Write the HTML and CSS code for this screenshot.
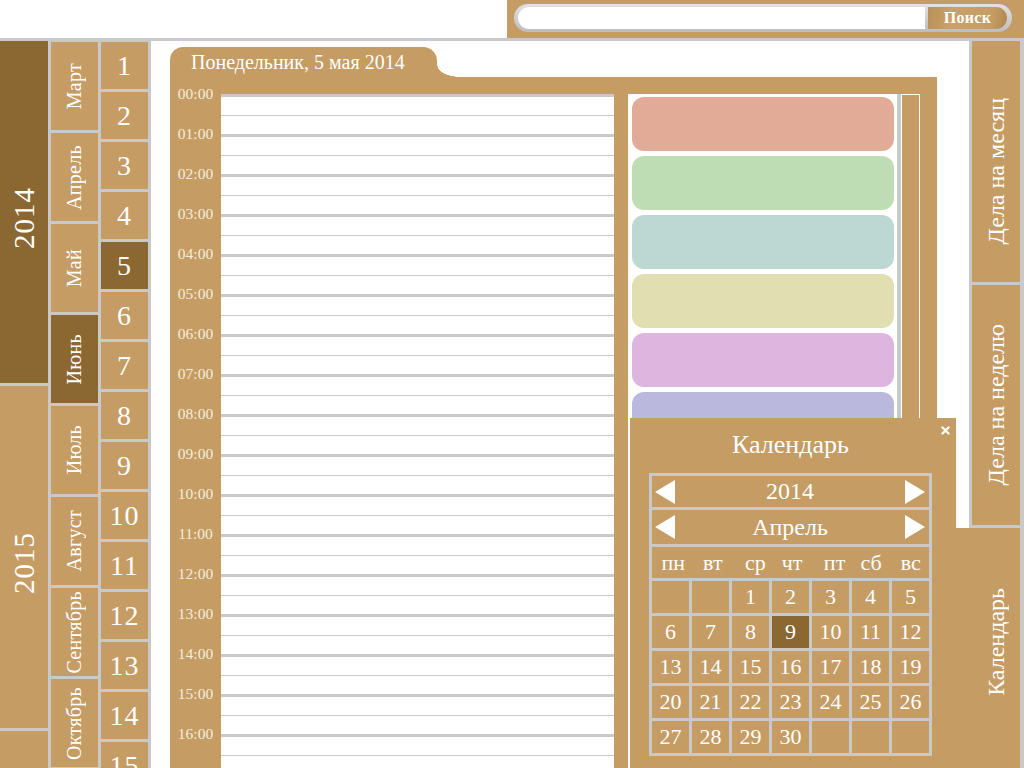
FILE: index.html
```html
<!DOCTYPE html>
<html lang="ru">
<head>
<meta charset="utf-8">
<title>Ежедневник</title>
<link rel="stylesheet" href="styles.css">
</head>
<body>
<header class="topbar">
  <div class="topbar-blank"></div>
  <div class="search">
    <div class="search-pill">
      <input class="search-input" type="text">
      <button class="search-btn" type="button">Поиск</button>
    </div>
  </div>
</header>

<div class="main">
  <nav class="years">
    <div class="year current"><span class="vtext">2014</span></div>
    <div class="year"><span class="vtext">2015</span></div>
    <div class="year"></div>
  </nav>

  <nav class="months">
    <div class="month"><span class="vtext">Март</span></div>
    <div class="month"><span class="vtext">Апрель</span></div>
    <div class="month"><span class="vtext">Май</span></div>
    <div class="month current"><span class="vtext">Июнь</span></div>
    <div class="month"><span class="vtext">Июль</span></div>
    <div class="month"><span class="vtext">Август</span></div>
    <div class="month"><span class="vtext">Сентябрь</span></div>
    <div class="month"><span class="vtext">Октябрь</span></div>
  </nav>

  <nav class="days">
    <div class="day">1</div>
    <div class="day">2</div>
    <div class="day">3</div>
    <div class="day">4</div>
    <div class="day current">5</div>
    <div class="day">6</div>
    <div class="day">7</div>
    <div class="day">8</div>
    <div class="day">9</div>
    <div class="day">10</div>
    <div class="day">11</div>
    <div class="day">12</div>
    <div class="day">13</div>
    <div class="day">14</div>
    <div class="day">15</div>
  </nav>

  <section class="workspace">
    <div class="day-panel">
      <div class="day-tab">Понедельник, 5 мая 2014</div>
      <div class="panel-body">
        <div class="times">
          <div class="time">00:00</div><div class="time">01:00</div><div class="time">02:00</div>
          <div class="time">03:00</div><div class="time">04:00</div><div class="time">05:00</div>
          <div class="time">06:00</div><div class="time">07:00</div><div class="time">08:00</div>
          <div class="time">09:00</div><div class="time">10:00</div><div class="time">11:00</div>
          <div class="time">12:00</div><div class="time">13:00</div><div class="time">14:00</div>
          <div class="time">15:00</div><div class="time">16:00</div>
        </div>
        <div class="schedule">
          <div class="hour"><div class="half"></div></div><div class="hour"><div class="half"></div></div>
          <div class="hour"><div class="half"></div></div><div class="hour"><div class="half"></div></div>
          <div class="hour"><div class="half"></div></div><div class="hour"><div class="half"></div></div>
          <div class="hour"><div class="half"></div></div><div class="hour"><div class="half"></div></div>
          <div class="hour"><div class="half"></div></div><div class="hour"><div class="half"></div></div>
          <div class="hour"><div class="half"></div></div><div class="hour"><div class="half"></div></div>
          <div class="hour"><div class="half"></div></div><div class="hour"><div class="half"></div></div>
          <div class="hour"><div class="half"></div></div><div class="hour"><div class="half"></div></div>
          <div class="hour"><div class="half"></div></div><div class="hour"><div class="half"></div></div>
          <div class="hour"><div class="half"></div></div>
        </div>
        <div class="agenda">
          <div class="cards">
            <div class="card c-red"></div>
            <div class="card c-green"></div>
            <div class="card c-teal"></div>
            <div class="card c-olive"></div>
            <div class="card c-pink"></div>
            <div class="card c-violet"></div>
            <div class="card c-red"></div>
          </div>
          <div class="track"><div class="thumb"></div></div>
        </div>
      </div>
    </div>

    <div class="popup">
      <span class="popup-close"><svg width="9" height="9" viewBox="0 0 9 9"><path d="M1.5 1.5 L7.5 7.5 M7.5 1.5 L1.5 7.5" stroke="#fff" stroke-width="2.4" stroke-linecap="round"/></svg></span>
      <div class="popup-title">Календарь</div>
      <div class="cal">
        <div class="cal-nav">
          <svg class="arrow" width="20" height="24" viewBox="0 0 20 24"><polygon points="20,0 0,12 20,24" fill="#fff"/></svg>
          <span>2014</span>
          <svg class="arrow" width="20" height="24" viewBox="0 0 20 24"><polygon points="0,0 20,12 0,24" fill="#fff"/></svg>
        </div>
        <div class="cal-nav">
          <svg class="arrow" width="20" height="24" viewBox="0 0 20 24"><polygon points="20,0 0,12 20,24" fill="#fff"/></svg>
          <span>Апрель</span>
          <svg class="arrow" width="20" height="24" viewBox="0 0 20 24"><polygon points="0,0 20,12 0,24" fill="#fff"/></svg>
        </div>
        <div class="cal-week">
          <span>пн</span><span>вт</span><span class="wd-r">ср</span><span>чт</span><span class="wd-r">пт</span><span>сб</span><span>вс</span>
        </div>
        <div class="cal-day"></div><div class="cal-day"></div><div class="cal-day">1</div><div class="cal-day">2</div><div class="cal-day">3</div><div class="cal-day">4</div><div class="cal-day">5</div>
        <div class="cal-day">6</div><div class="cal-day">7</div><div class="cal-day">8</div><div class="cal-day sel">9</div><div class="cal-day">10</div><div class="cal-day">11</div><div class="cal-day">12</div>
        <div class="cal-day">13</div><div class="cal-day">14</div><div class="cal-day">15</div><div class="cal-day">16</div><div class="cal-day">17</div><div class="cal-day">18</div><div class="cal-day">19</div>
        <div class="cal-day">20</div><div class="cal-day">21</div><div class="cal-day">22</div><div class="cal-day">23</div><div class="cal-day">24</div><div class="cal-day">25</div><div class="cal-day">26</div>
        <div class="cal-day">27</div><div class="cal-day">28</div><div class="cal-day">29</div><div class="cal-day">30</div><div class="cal-day"></div><div class="cal-day"></div><div class="cal-day"></div>
      </div>
    </div>
  </section>

  <aside class="side">
    <div class="stab first"><span class="vtext">Дела на месяц</span></div>
    <div class="stab"><span class="vtext">Дела на неделю</span></div>
    <div class="stab active"><span class="vtext">Календарь</span></div>
  </aside>
</div>
</body>
</html>
```

FILE: styles.css
```css
* { box-sizing: border-box; }

html, body {
  margin: 0;
  padding: 0;
}

body {
  width: 1024px;
  height: 768px;
  overflow: hidden;
  background: #fff;
  color: #fff;
  font-family: "Liberation Serif", "Times New Roman", serif;
}

.vtext {
  writing-mode: vertical-rl;
  transform: rotate(180deg);
  white-space: nowrap;
}

/* ---------- top bar ---------- */
.topbar {
  display: flex;
  height: 41px;
  border-bottom: 3px solid #c9c9c9;
}

.topbar-blank { width: 507px; }

.search {
  flex: 1;
  background: #c59c63;
  padding: 4px 12px 0 7px;
}

.search-pill {
  height: 28px;
  display: flex;
  gap: 3px;
  padding: 3px 5px 3px 4px;
  border-radius: 14px;
  background: linear-gradient(#e2e2e2, #bdbdbd);
}

.search-input {
  flex: 1;
  border: 0;
  outline: 0;
  border-radius: 11px 0 0 11px;
  background: #fff;
}

.search-btn {
  width: 79px;
  border: 0;
  padding: 0;
  border-radius: 0 11px 11px 0;
  background: linear-gradient(100deg, #b88f57, #caa169 30%, #c59c63 80%, #b08650);
  color: #fff;
  font-family: "Liberation Serif", serif;
  font-weight: bold;
  font-size: 16px;
  letter-spacing: 0.3px;
}

/* ---------- main area ---------- */
.main {
  display: flex;
  gap: 3px;
  height: 727px;
  background: #c9c9c9;
}

.years {
  width: 48px;
  flex: none;
  display: flex;
  flex-direction: column;
  gap: 3px;
}

.year {
  height: 342px;
  flex: none;
  background: #c59c63;
  display: flex;
  align-items: center;
  justify-content: center;
  padding-top: 12px;
  font-size: 29px;
  letter-spacing: 1px;
}

.year:last-child { flex: 1; height: auto; }

.year.current { background: #8b6732; }

.months, .days {
  width: 47px;
  flex: none;
  display: flex;
  flex-direction: column;
  gap: 3px;
  padding-top: 1px;
  overflow: hidden;
}

.month {
  height: 88px;
  flex: none;
  background: #c59c63;
  display: flex;
  align-items: center;
  justify-content: center;
  font-size: 20px;
  letter-spacing: 0.3px;
}

.month.current { background: #8b6732; }

.day {
  height: 47px;
  flex: none;
  background: #c59c63;
  display: flex;
  align-items: center;
  justify-content: center;
  font-size: 28px;
  letter-spacing: 1px;
}

.day.current { background: #8b6732; }

/* ---------- workspace ---------- */
.workspace {
  width: 818px;
  flex: none;
  position: relative;
  overflow: hidden;
  background: #fff;
  padding: 6px 0 0 19px;
}

.day-panel {
  width: 767px;
  height: 800px;
  display: flex;
  flex-direction: column;
}

.day-tab {
  position: relative;
  width: 267px;
  height: 30px;
  flex: none;
  background: #c59c63;
  border-radius: 13px 14px 0 0;
  padding-left: 21px;
  line-height: 31px;
  font-size: 20px;
  white-space: nowrap;
}

.day-tab::after {
  content: "";
  position: absolute;
  right: -23px;
  bottom: 0;
  width: 23px;
  height: 12px;
  background: radial-gradient(ellipse 23px 12px at 100% 0, #fff 97%, #c59c63 100%);
}

.panel-body {
  flex: 1;
  display: flex;
  align-items: flex-start;
  background: #c59c63;
  padding-right: 17px;
}

.times {
  width: 51px;
  flex: none;
  padding-top: 7px;
}

.time {
  height: 40px;
  line-height: 20px;
  font-size: 15.5px;
  text-align: center;
  color: #f5ecdc;
}

.schedule {
  width: 393px;
  flex: none;
  margin-top: 17px;
  background: #fff;
}

.hour {
  height: 40px;
  border-top: 3px solid #c9c9c9;
}

.half {
  height: 19px;
  border-bottom: 1px solid #c9c9c9;
}

.agenda {
  display: flex;
  align-self: stretch;
  margin: 17px 0 0 14px;
}

.cards {
  width: 269px;
  background: #fff;
  padding: 3px 3px 0 4px;
  display: flex;
  flex-direction: column;
  gap: 5px;
  overflow: hidden;
}

.card {
  height: 54px;
  flex: none;
  border-radius: 12px;
}

.c-red { background: #e2ab98; }
.c-green { background: #bfddb4; }
.c-teal { background: #bdd7d2; }
.c-olive { background: #e1dfb1; }
.c-pink { background: #ddb5de; }
.c-violet { background: #bab8dc; }

.track {
  width: 23px;
  border-left: 4px solid #c9c9c9;
}

.thumb {
  height: 420px;
  border: 1px solid #fff;
  background: #c59c63;
}

/* ---------- calendar popup ---------- */
.popup {
  position: absolute;
  left: 479px;
  top: 377px;
  width: 326px;
  bottom: 0;
  background: #c59c63;
  padding: 12px 0 0 19px;
}

.popup-close {
  position: absolute;
  top: 8px;
  right: 6px;
  width: 9px;
  height: 9px;
  display: flex;
}

.popup-title {
  width: 283px;
  height: 30px;
  line-height: 30px;
  margin-bottom: 13px;
  text-align: center;
  font-size: 26px;
}

.cal {
  width: 283px;
  display: grid;
  grid-template-columns: repeat(7, 37px);
  grid-template-rows: 31px 34px 31px repeat(5, 32px);
  gap: 3px;
  padding: 3px;
  background: #c9c9c9;
}

.cal-nav {
  grid-column: 1 / -1;
  display: flex;
  align-items: center;
  justify-content: space-between;
  padding: 0 4px 0 3px;
  background: #c59c63;
  font-size: 24px;
}

.cal-week {
  grid-column: 1 / -1;
  display: grid;
  grid-template-columns: repeat(7, 1fr);
  align-items: center;
  text-align: center;
  background: #c59c63;
  font-size: 22px;
}

.cal-week span { padding-left: 3px; }
.cal-week .wd-r { padding-left: 9px; }

.cal-day {
  display: flex;
  align-items: center;
  justify-content: center;
  background: #c59c63;
  font-size: 22px;
}

.cal-day.sel { background: #8b6732; }

/* ---------- side tabs ---------- */
.side {
  width: 48px;
  flex: none;
  display: flex;
  flex-direction: column;
  gap: 3px;
}

.stab {
  height: 241px;
  flex: none;
  display: flex;
  align-items: center;
  justify-content: center;
  background: #c59c63;
  font-size: 24px;
}

.stab.first { padding-top: 20px; }

.stab + .stab { height: 240px; }

.stab.active {
  flex: 1;
  height: auto;
  position: relative;
  margin-left: -16px;
  padding: 0 0 12px 16px;
}
```
